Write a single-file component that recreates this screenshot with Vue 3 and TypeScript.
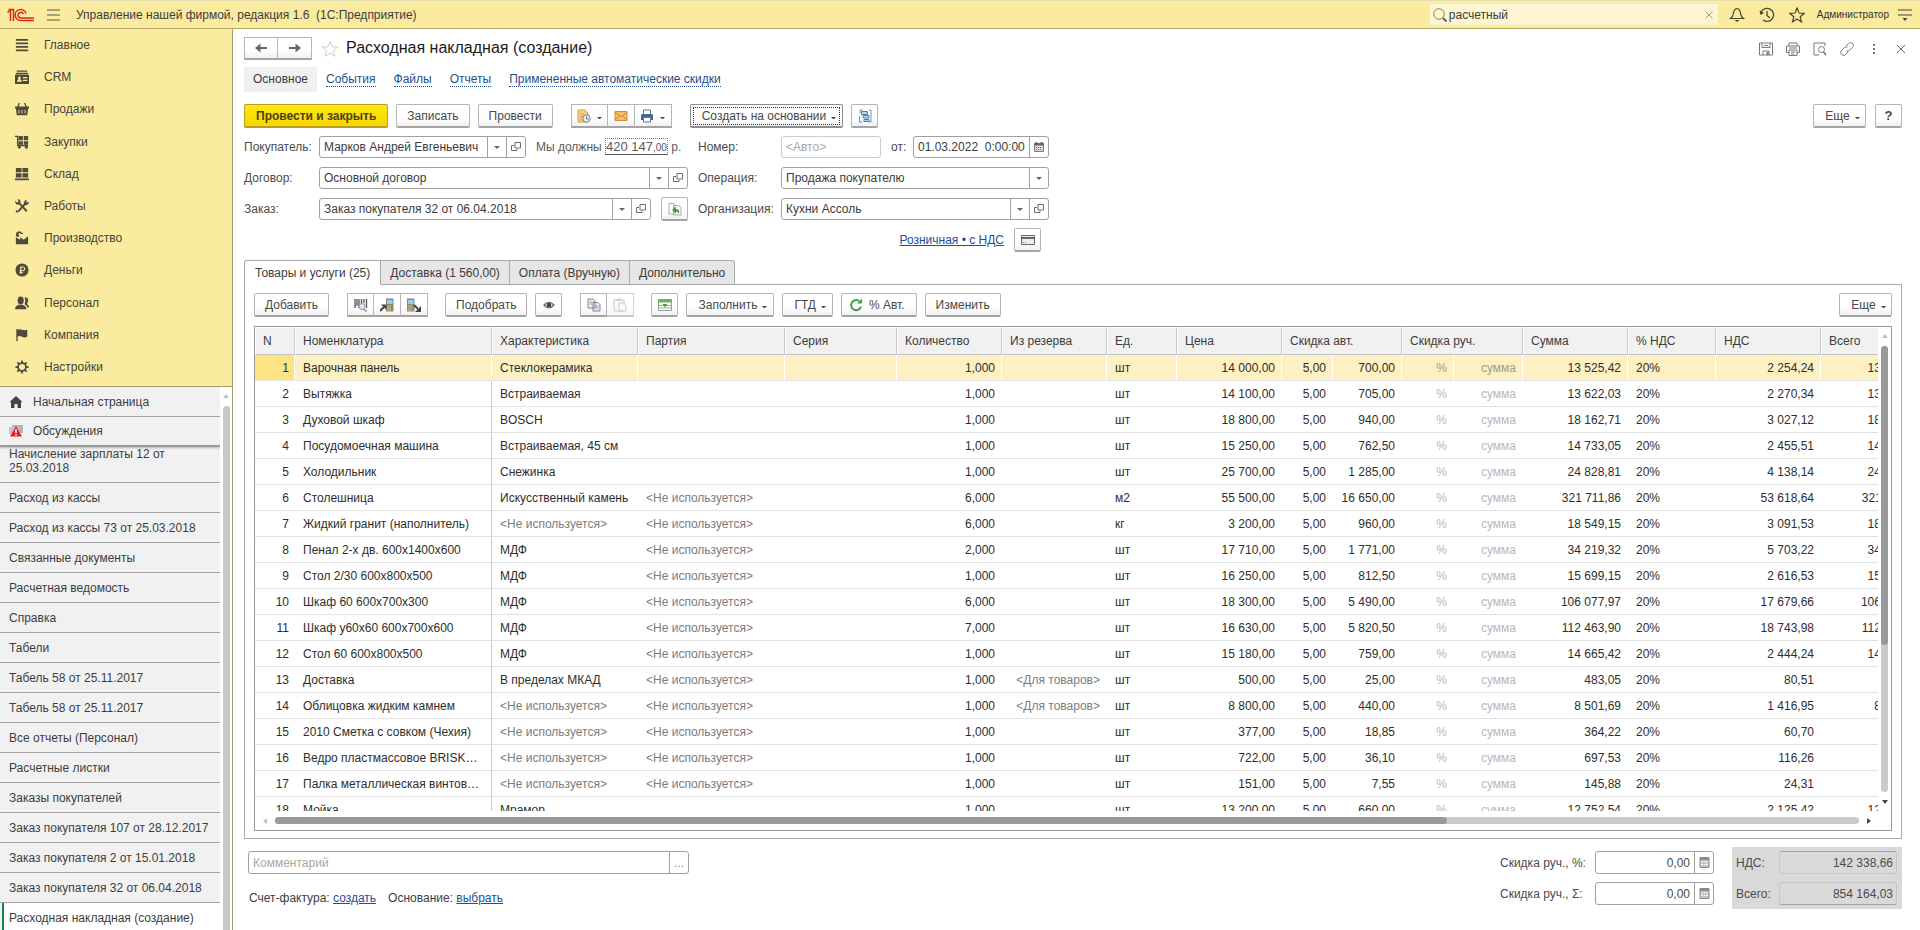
<script setup lang="ts">
import { ref } from 'vue'

interface Section { name: string; icon: string }
interface Row {
  n: number; item: string; feature: string; batch: string; qty: string; reserve: string; unit: string
  price: string; autoSum: string; sum: string; vat: string
}

const sections: Section[] = [
  { name: 'Главное', icon: '<path d="M1 2h14M1 6h14M1 10h14M1 14h14" stroke="currentColor" stroke-width="2"/>' },
  { name: 'CRM', icon: '<path d="M2 .5h12v1.500H2zM1 3h14v1.500H1z"/><path fill-rule="evenodd" d="M1 5h14q1 0 1 1v9q0 1-1 1H1q-1 0-1-1V6q0-1 1-1zM5 7.500a1.700 2 0 0 0-1 3.500q-2 .5-2 2.500h6q0-2-2-2.500a1.700 2 0 0 0-1-3.500zM9 8v1.500h5V8zM9 11v1.500h5V11z"/>' },
  { name: 'Продажи', icon: '<path d="M5 1 3 6M11 1l2 5" stroke="currentColor" stroke-width="1.500"/><path fill-rule="evenodd" d="M0 5h16v2.500h-1L14 15H2L1 7.500H0zM4 9v4h1V9zM7.500 9v4h1V9zM11 9v4h1V9z"/>' },
  { name: 'Закупки', icon: '<path d="M0 1.500h3V12h12" fill="none" stroke="currentColor" stroke-width="1.500"/><path d="M4 1h5v5H4zM10 1h5v5h-5zM4 7h5v4H4zM10 7h5v4h-5z"/><circle cx="5" cy="14" r="1.700"/><circle cx="13" cy="14" r="1.700"/>' },
  { name: 'Склад', icon: '<path d="M1 1h6.500v5H1zM8.500 1H15v5H8.500zM1 7h6.500v5H1zM8.500 7H15v5H8.500zM0 13h16v2H0z"/>' },
  { name: 'Работы', icon: '<path d="M3.500 14.500 13 4M5 5l8.500 9" stroke="currentColor" stroke-width="2.200"/><path d="M0 2l2.500 2L4 3 3 0q3 0 3.500 3L5 6 2 6.500Q0 5 0 2zM10 5l1-3 3-1.500-1.500 2.500L14 4l2-1q0 3-3 4zM1 12l3 3-3 .5z"/>' },
  { name: 'Производство', icon: '<path d="M1 15V7l5 3V7l4 3 5-4v9zM1 6 1.500 1.500h2.500L4.500 7zM3 .5h4v2H4zM7 2h2v1.500H6z"/>' },
  { name: 'Деньги', icon: '<path fill-rule="evenodd" d="M8 .5a7.500 7.500 0 1 0 0 15 7.500 7.500 0 0 0 0-15zM6 4h3a2.700 2.700 0 0 1 0 5.400H7.400v.8H9v1H7.400V12.500H6v-1.300H5v-1h1v-.8H5V8.200h1zm1.400 1.200v3H9a1.500 1.500 0 0 0 0-3z"/>' },
  { name: 'Персонал', icon: '<ellipse cx="6.500" cy="5" rx="3.500" ry="4.500"/><path d="M0 15q0-3.500 4.500-5h4q4.500 1.500 4.500 5z"/><path d="M11 1.500q4.500 0 4 4.500-.5 2-1.500 3 2.500.8 2.500 4h-2q-.5-2.500-3-3.500 1.500-4 0-8z"/>' },
  { name: 'Компания', icon: '<path d="M1.500 1v14h1.500v-5q2.500-1.500 5 0t6 0V2q-3 1-6 0T3 2V1z"/>' },
  { name: 'Настройки', icon: '<circle cx="8" cy="8" r="4.500" fill="none" stroke="currentColor" stroke-width="2"/><path d="M8 .5v3M8 12.500v3M.5 8h3M12.500 8h3M2.700 2.700l2 2M11.300 11.300l2 2M2.700 13.300l2-2M11.300 4.700l2-2" stroke="currentColor" stroke-width="2"/>' },
]

const opened: string[] = [
  'Начисление зарплаты 12 от 25.03.2018', 'Расход из кассы', 'Расход из кассы 73 от 25.03.2018', 'Связанные документы',
  'Расчетная ведомость', 'Справка', 'Табели', 'Табель 58 от 25.11.2017', 'Табель 58 от 25.11.2017', 'Все отчеты (Персонал)',
  'Расчетные листки', 'Заказы покупателей', 'Заказ покупателя 107 от 28.12.2017', 'Заказ покупателя 2 от 15.01.2018',
  'Заказ покупателя 32 от 06.04.2018', 'Расходная накладная (создание)',
]

const links: string[] = ['События', 'Файлы', 'Отчеты', 'Примененные автоматические скидки']
const tabs: string[] = ['Товары и услуги (25)', 'Доставка (1 560,00)', 'Оплата (Вручную)', 'Дополнительно']
const activeTab = ref(0)

const unused = '<Не используется>'
const forGoods = '<Для товаров>'
const source: string[][] = [
  ['Варочная панель', 'Стеклокерамика', '', '1,000', '', 'шт', '14 000,00', '700,00', '13 525,42', '2 254,24'],
  ['Вытяжка', 'Встраиваемая', '', '1,000', '', 'шт', '14 100,00', '705,00', '13 622,03', '2 270,34'],
  ['Духовой шкаф', 'BOSCH', '', '1,000', '', 'шт', '18 800,00', '940,00', '18 162,71', '3 027,12'],
  ['Посудомоечная машина', 'Встраиваемая, 45 см', '', '1,000', '', 'шт', '15 250,00', '762,50', '14 733,05', '2 455,51'],
  ['Холодильник', 'Снежинка', '', '1,000', '', 'шт', '25 700,00', '1 285,00', '24 828,81', '4 138,14'],
  ['Столешница', 'Искусственный камень', unused, '6,000', '', 'м2', '55 500,00', '16 650,00', '321 711,86', '53 618,64'],
  ['Жидкий гранит (наполнитель)', unused, unused, '6,000', '', 'кг', '3 200,00', '960,00', '18 549,15', '3 091,53'],
  ['Пенал 2-х дв. 600х1400х600', 'МДФ', unused, '2,000', '', 'шт', '17 710,00', '1 771,00', '34 219,32', '5 703,22'],
  ['Стол 2/30 600х800х500', 'МДФ', unused, '1,000', '', 'шт', '16 250,00', '812,50', '15 699,15', '2 616,53'],
  ['Шкаф 60 600х700х300', 'МДФ', unused, '6,000', '', 'шт', '18 300,00', '5 490,00', '106 077,97', '17 679,66'],
  ['Шкаф у60х60 600х700х600', 'МДФ', unused, '7,000', '', 'шт', '16 630,00', '5 820,50', '112 463,90', '18 743,98'],
  ['Стол 60 600х800х500', 'МДФ', unused, '1,000', '', 'шт', '15 180,00', '759,00', '14 665,42', '2 444,24'],
  ['Доставка', 'В пределах МКАД', unused, '1,000', forGoods, 'шт', '500,00', '25,00', '483,05', '80,51'],
  ['Облицовка жидким камнем', unused, unused, '1,000', forGoods, 'шт', '8 800,00', '440,00', '8 501,69', '1 416,95'],
  ['2010 Сметка с совком (Чехия)', unused, unused, '1,000', '', 'шт', '377,00', '18,85', '364,22', '60,70'],
  ['Ведро пластмассовое BRISK10 л', unused, unused, '1,000', '', 'шт', '722,00', '36,10', '697,53', '116,26'],
  ['Палка металлическая винтовая 2 м', unused, unused, '1,000', '', 'шт', '151,00', '7,55', '145,88', '24,31'],
  ['Мойка', 'Мрамор', '', '1,000', '', 'шт', '13 200,00', '660,00', '12 752,54', '2 125,42'],
]
const rows: Row[] = source.map((s, i) => ({
  n: i + 1, item: s[0], feature: s[1], batch: s[2], qty: s[3], reserve: s[4], unit: s[5],
  price: s[6], autoSum: s[7], sum: s[8], vat: s[9],
}))
const selected = ref(1)

const buyer = ref('Марков Андрей Евгеньевич')
const contract = ref('Основной договор')
const order = ref('Заказ покупателя 32 от 06.04.2018')
const date = ref('01.03.2022  0:00:00')
const org = ref('Кухни Ассоль')
const search = ref('расчетный')
const discountPercent = ref('0,00')
const discountSum = ref('0,00')
const comment = ref('')

const openIcon = '<path d="M5 1.500h5.500V7H5zM4 4.500H1.500v5H7V8" fill="none" stroke="#6a6a6a"/>'
const calcIcon = '<path d="M2 1.500h9v10H2z" fill="#c4c4c4" stroke="#8a8a8a"/><path d="M2 3h9" stroke="#8a8a8a" stroke-width="2"/><path d="M3 6h2m1 0h1m1 0h2M3 8.500h2m1 0h1m1 0h2" stroke="#fff"/>'
</script>

<template>
  <div class="app">
    <header class="topbar">
      <svg class="logo" viewBox="0 0 27 14" aria-label="1С" role="img">
        <g fill="none" stroke="#d8281e" stroke-width="1.500">
          <path d="M0.500 4.500 3.500 2v11M1.500 1.500h5V13" />
          <path d="M19 5.500a5.500 5.500 0 1 0-5 7H27" />
          <path d="M16.500 6a2.800 2.800 0 1 0-2.500 4H27" />
        </g>
      </svg>
      <button class="plain burger" aria-label="Меню"><svg viewBox="0 0 14 12"><path d="M0 1h13M0 6h13M0 11h13" stroke="#555" /></svg></button>
      <span class="apptitle">Управление нашей фирмой, редакция 1.6 &nbsp;(1С:Предприятие)</span>
      <div class="search">
        <svg viewBox="0 0 14 14"><circle cx="6" cy="6" r="5.300" fill="none" stroke="#8d8354" /><path d="M10 10l3.500 3.500" stroke="#6b6340" stroke-width="2" /></svg>
        <input v-model="search" aria-label="Поиск">
        <button class="plain clear" aria-label="Очистить"><svg viewBox="0 0 8 8"><path d="M.5.5l7 7M7.500.5l-7 7" stroke="#a29a72" /></svg></button>
      </div>
      <button class="plain ti" aria-label="Уведомления"><svg viewBox="0 0 16 16"><path d="M8 1.500Q5 2 4.500 6T1.500 11.500h13Q12 10 11.500 6T8 1.500z" fill="none" stroke="#4a4530" stroke-width="1.200" /><path d="M5.500 13h5L8 15z" fill="#4a4530" /></svg></button>
      <button class="plain ti" aria-label="История"><svg viewBox="0 0 16 16"><path d="M2.300 5A6.500 6.500 0 1 1 4 13M8 4v4.500l3 2.500" fill="none" stroke="#4a4530" stroke-width="1.300" /><path d="M.5 3.500 5 6 1.500 8z" fill="#4a4530" /></svg></button>
      <button class="plain ti" aria-label="Избранное"><svg viewBox="0 0 16 16"><path d="M8 1l2 5 5.200.3-4 3.400 1.300 5.200L8 12l-4.500 2.900 1.300-5.200-4-3.400L6 6z" fill="none" stroke="#4a4530" stroke-width="1.200" /></svg></button>
      <span class="user">Администратор</span>
      <button class="plain more" aria-label="Сервис"><svg viewBox="0 0 14 14"><path d="M0 2h14M0 7h14" stroke="#4a4530" stroke-width="1.200" /><path d="M4.500 10h5L7 13z" fill="#4a4530" /></svg></button>
    </header>

    <div class="body">
      <aside class="side">
        <nav class="sections">
          <a v-for="s in sections" :key="s.name" href="#">
            <svg viewBox="0 0 16 16" fill="currentColor" v-html="s.icon" />{{ s.name }}
          </a>
        </nav>
        <div class="windows">
          <nav class="wlist">
            <a class="w pinned" href="#"><svg viewBox="0 0 14 14"><path d="M7 1 .5 7H2v6h3.500V9h3v4H12V7h1.500z" fill="#444" /></svg>Начальная страница</a>
            <a class="w pinned talks" href="#"><svg viewBox="0 0 14 14"><path d="M3 1h11v8H3z" fill="#b3b3b3" /><path d="M0 3h10v7H5l-2 3v-3H0z" fill="#c4c6c8" /><path d="M7 2 13 12.500H1z" fill="#e22020" /><path d="M7 5v4M7 10v1.500" stroke="#fff" stroke-width="1.500" /></svg>Обсуждения</a>
            <a v-for="(w, i) in opened" :key="i" class="w" :class="{ first: i === 0, current: i === opened.length - 1 }" href="#">{{ w }}</a>
          </nav>
          <div class="wscroll"><i class="up" /><i class="thumb" /></div>
        </div>
      </aside>

      <main class="page">
        <div class="titlerow">
          <div class="group nav">
            <button class="btn" aria-label="Назад"><svg viewBox="0 0 12 10"><path d="M5.500.5v3.500H12v2H5.500v3.500L0 5z" fill="#666" /></svg></button>
            <button class="btn" aria-label="Вперед"><svg viewBox="0 0 12 10"><path d="M6.500.5v3.500H0v2h6.500v3.500L12 5z" fill="#666" /></svg></button>
          </div>
          <svg class="fav" viewBox="0 0 18 18"><path d="M9 1.500l2.200 5.300 5.600.3-4.400 3.600 1.500 5.600L9 13.200l-4.900 3.100 1.500-5.600L1.200 7.100l5.600-.3z" fill="none" stroke="#ccc" /></svg>
          <h1>Расходная накладная (создание)</h1>
          <div class="wtools">
            <button class="plain" aria-label="Сохранить"><svg viewBox="0 0 14 14"><path d="M.5 1h13v12H.5zM3 1v4.500h8V1M4 13V9h6v4M5 3.500h4" fill="none" stroke="#777" /><path d="M7.500 10h2v3h-2z" fill="#777" /></svg></button>
            <button class="plain" aria-label="Печать"><svg viewBox="0 0 14 14"><path d="M3 4V1h8v3M3 10.500H.5V4h13v6.500H11M3 8h8v5.500H3zM5 10h4M5 12h3M3 6h8" fill="none" stroke="#777" /></svg></button>
            <button class="plain" aria-label="Просмотр"><svg viewBox="0 0 14 14"><path d="M6 13H1V1h11v3" fill="none" stroke="#777" /><circle cx="8.500" cy="7.500" r="3" fill="none" stroke="#777" /><path d="M10.500 10l2.500 3" stroke="#777" stroke-width="1.500" /></svg></button>
            <button class="plain" aria-label="Ссылка"><svg viewBox="0 0 14 14"><path d="M6 4l2.500-2.500a2.800 2.800 0 0 1 4 4L9.500 8.500a2.500 2.500 0 0 1-3 .3M8 10l-2.500 2.500a2.800 2.800 0 0 1-4-4L4.500 5.500a2.500 2.500 0 0 1 3-.3" fill="none" stroke="#777" /></svg></button>
            <button class="plain" aria-label="Действия"><svg viewBox="0 0 14 14"><path d="M6 2h2v2H6zM6 6h2v2H6zM6 10h2v2H6z" fill="#777" /></svg></button>
            <button class="plain" aria-label="Закрыть"><svg viewBox="0 0 14 14"><path d="M3 3l8 8M11 3l-8 8" stroke="#666" /></svg></button>
          </div>
        </div>

        <nav class="subnav">
          <span class="here">Основное</span>
          <a v-for="l in links" :key="l" href="#">{{ l }}</a>
        </nav>

        <div class="commands">
          <button class="btn primary">Провести и закрыть</button>
          <button class="btn">Записать</button>
          <button class="btn">Провести</button>
          <div class="group docs">
            <button class="btn wide" aria-label="Состояние"><svg viewBox="0 0 14 14"><path d="M1 1h7l3 3v9H1z" fill="#f3d27c" stroke="#cda245" /><path d="M3 5h4M3 8h3M3 11h2" stroke="#cda245" /><circle cx="9.500" cy="9.500" r="3.700" fill="#e6e9f2" stroke="#76809c" /><path d="M9.500 7v3H12" fill="none" stroke="#76809c" /></svg><i class="caret" /></button>
            <button class="btn" aria-label="Письмо"><svg viewBox="0 0 14 14"><path d="M1 2.500h12v9H1z" fill="#f5bd68" stroke="#d08f36" /><path d="M1 3l6 5 6-5M1 11l4-4M13 11 9 7" fill="none" stroke="#c98730" /></svg></button>
            <button class="btn wide" aria-label="Печать"><svg viewBox="0 0 14 14"><path d="M3.500 1h7v5h-7z" fill="#fff" stroke="#56799b" /><path d="M2 5h10l1 1v5H1V6z" fill="#426b92" /><path d="M3.500 8.500h7v4.500h-7z" fill="#fff" stroke="#56799b" /></svg><i class="caret" /></button>
          </div>
          <button class="btn focus drop">Создать на основании<i class="caret" /></button>
          <button class="btn ico scheme" aria-label="Структура"><svg viewBox="0 0 14 14"><path d="M2 4.500V1h3M11 1h2v12h-2M1.500 7v6h3" fill="none" stroke="#6d96b8" /><path d="M3.500 2.500h6v3h-6zM5 6.500h6v2.500H5zM6 10.500h5v2H6z" fill="#b8d6ec" stroke="#4b80aa" /></svg></button>
          <span class="grow" />
          <button class="btn menu">Еще<i class="caret" /></button>
          <button class="btn ico help">?</button>
        </div>

        <div class="form">
          <div class="col left">
            <div class="line">
              <label for="buyer">Покупатель:</label>
              <div class="field b1"><input id="buyer" v-model="buyer"><button aria-label="Выбрать"><i class="tri" /></button><button aria-label="Открыть"><svg viewBox="0 0 12 12" v-html="openIcon" /></button></div>
              <span class="debt">Мы должны <a href="#">420 147<small>,00</small></a> р.</span>
            </div>
            <div class="line">
              <label for="contract">Договор:</label>
              <div class="field fill"><input id="contract" v-model="contract"><button aria-label="Выбрать"><i class="tri" /></button><button aria-label="Открыть"><svg viewBox="0 0 12 12" v-html="openIcon" /></button></div>
            </div>
            <div class="line">
              <label for="order">Заказ:</label>
              <div class="field fill"><input id="order" v-model="order"><button aria-label="Выбрать"><i class="tri" /></button><button aria-label="Открыть"><svg viewBox="0 0 12 12" v-html="openIcon" /></button></div>
              <button class="btn ico refill" aria-label="Заполнить по заказу"><svg viewBox="0 0 14 14"><path d="M1 1.500h5V12H1zM5.500 3.500h5l2.500 2V13H5.500z" fill="#fff" stroke="#aaa" /><path d="M4 8l4-3.500V7q4 0 3 5-1-2.500-3-2.500v2z" fill="#3fa22f" /></svg></button>
            </div>
          </div>
          <div class="col right">
            <div class="line">
              <label for="number">Номер:</label>
              <div class="field auto"><input id="number" placeholder="<Авто>"></div>
              <label class="from" for="date">от:</label>
              <div class="field fill"><input id="date" v-model="date" class="pre"><button aria-label="Календарь"><svg viewBox="0 0 12 12"><path d="M1.500 2.500h9v8h-9z" fill="#ddd" stroke="#777" /><path d="M1 3.500h10M3.500 1v2M8.500 1v2" stroke="#666" stroke-width="2" /><path d="M3 6.500h6M3 8.500h6" stroke="#666" stroke-dasharray="1 1" /></svg></button></div>
            </div>
            <div class="line">
              <label for="operation">Операция:</label>
              <div class="field fill"><select id="operation"><option>Продажа покупателю</option></select><button aria-label="Выбрать"><i class="tri" /></button></div>
            </div>
            <div class="line">
              <label for="org">Организация:</label>
              <div class="field fill"><input id="org" v-model="org"><button aria-label="Выбрать"><i class="tri" /></button><button aria-label="Открыть"><svg viewBox="0 0 12 12" v-html="openIcon" /></button></div>
            </div>
            <div class="line prices">
              <a class="link" href="#">Розничная • с НДС</a>
              <button class="btn ico" aria-label="Карта"><svg viewBox="0 0 14 14"><path d="M.5 2.500h13v9H.5z" fill="#eee" stroke="#666" /><path d="M0 5h14" stroke="#666" stroke-width="2" /><path d="M2 9.500h4" stroke="#777" stroke-dasharray="1 1" /></svg></button>
            </div>
          </div>
        </div>

        <div class="tabs" role="tablist">
          <button v-for="(t, i) in tabs" :key="t" role="tab" :aria-selected="i === activeTab" :class="{ on: i === activeTab }" @click="activeTab = i">{{ t }}</button>
        </div>

        <section class="panel">
          <div class="tools">
            <button class="btn">Добавить</button>
            <div class="group g1">
              <button class="btn" aria-label="Поиск по штрихкоду"><svg viewBox="0 0 14 14"><path d="M1 1v9M3 1v7M5 1v9M7.500 1v5M10 1v4M12.500 1v9" stroke="#555" stroke-width="1.300" /><circle cx="8" cy="8.500" r="3" fill="#d8e8f8" stroke="#8b98ad" /><path d="M10 11l2.500 2.500" stroke="#a6826f" stroke-width="1.500" /></svg></button>
              <button class="btn" aria-label="Загрузить из терминала"><svg viewBox="0 0 14 14"><path d="M6 .5h7.500v13H6z" fill="#8c8878" /><path d="M7 2h5.500v4H7z" fill="#8fd0ef" /><path d="M7.500 8h1m1 0h1m-3 2h1m1 0h1m-3 2h1m1 0h1" stroke="#f2d25c" stroke-width="1.400" /><path d="M0 13l4-4" stroke="#444" stroke-width="2" /><path d="M1 6.500h5.500V12z" fill="#444" /></svg></button>
              <button class="btn" aria-label="Выгрузить в терминал"><svg viewBox="0 0 14 14"><path d="M0 .5h7.500v13H0z" fill="#8c8878" /><path d="M1 2h5.500v4H1z" fill="#8fd0ef" /><path d="M1.500 8h1m1 0h1m-3 2h1m1 0h1m-3 2h1m1 0h1" stroke="#f2d25c" stroke-width="1.400" /><path d="M7 7l4 4" stroke="#444" stroke-width="2" /><path d="M14 8v6H8z" fill="#444" /></svg></button>
            </div>
            <button class="btn">Подобрать</button>
            <button class="btn ico eye" aria-label="Просмотр"><svg viewBox="0 0 14 14"><path d="M2 7q5-5.500 10 0-5 5.500-10 0z" fill="#ddd" stroke="#666" stroke-width="1.200" /><circle cx="7" cy="7" r="2.200" fill="#444" /></svg></button>
            <div class="group g2">
              <button class="btn" aria-label="Копировать"><svg viewBox="0 0 14 14"><path d="M1 1h5l2 2v7H1zM6 4.500h5l2 2V13H6z" fill="#e9edf2" stroke="#7c8590" /><path d="M7.500 8h4m-4 2h4M2.500 4h3m-3 2h3" stroke="#8fa0b4" /></svg></button>
              <button class="btn off" disabled aria-label="Вставить"><svg viewBox="0 0 14 14"><path d="M1 2h10v11H1z" fill="#fdf5ef" stroke="#cf9c80" /><path d="M4 .8h4v2H4z" fill="#aaa" /><path d="M6 5h5l2 2v6H6z" fill="#f6f6f6" stroke="#aaa" /></svg></button>
            </div>
            <button class="btn ico list" aria-label="Список"><svg viewBox="0 0 14 14"><path d="M.5 1.500h13v11H.5z" fill="#fff" stroke="#999" /><path d="M0 3h14" stroke="#6db35e" stroke-width="3" /><path d="M1 7.500h12M1 10h12" stroke="#aaa" /><path d="M4.500 6h5L7 9.500z" fill="#4ea13c" /></svg></button>
            <button class="btn drop">Заполнить<i class="caret" /></button>
            <button class="btn drop">ГТД<i class="caret" /></button>
            <button class="btn auto-pct"><svg viewBox="0 0 14 14"><path d="M12 8.500A5 5 0 1 1 10 3" fill="none" stroke="#46a046" stroke-width="2" /><path d="M8 5.500h5V.5z" fill="#46a046" /></svg>% Авт.</button>
            <button class="btn">Изменить</button>
            <span class="grow" />
            <button class="btn menu">Еще<i class="caret" /></button>
          </div>

          <div class="gridbox">
            <div class="clip">
              <table>
                <colgroup>
                  <col class="c40"><col class="c197"><col class="c146"><col class="c147"><col class="c112"><col class="c105"><col class="c105"><col class="c70"><col class="c105"><col class="c51"><col class="c69"><col class="c52"><col class="c69"><col class="c105"><col class="c88"><col class="c105"><col class="c107">
                </colgroup>
                <thead>
                  <tr>
                    <th>N</th><th>Номенклатура</th><th>Характеристика</th><th>Партия</th><th>Серия</th><th>Количество</th><th>Из резерва</th><th>Ед.</th><th>Цена</th>
                    <th colspan="2">Скидка авт.</th><th colspan="2">Скидка руч.</th><th>Сумма</th><th>% НДС</th><th>НДС</th><th>Всего</th>
                  </tr>
                </thead>
                <tbody>
                  <tr v-for="r in rows" :key="r.n" :class="{ sel: r.n === selected }" @click="selected = r.n">
                    <td class="r num">{{ r.n }}</td>
                    <td class="item">{{ r.item }}</td>
                    <td :class="{ dim: r.feature === unused }">{{ r.feature }}</td>
                    <td class="dim">{{ r.batch }}</td>
                    <td />
                    <td class="r">{{ r.qty }}</td>
                    <td class="r dim">{{ r.reserve }}</td>
                    <td>{{ r.unit }}</td>
                    <td class="r">{{ r.price }}</td>
                    <td class="r">5,00</td>
                    <td class="r">{{ r.autoSum }}</td>
                    <td class="r hint">%</td>
                    <td class="r hint">сумма</td>
                    <td class="r">{{ r.sum }}</td>
                    <td>20%</td>
                    <td class="r">{{ r.vat }}</td>
                    <td class="r">{{ r.sum }}</td>
                  </tr>
                </tbody>
              </table>
            </div>
            <div class="vs"><i class="up" /><div class="track"><i class="thumb" /></div><i class="down" /></div>
            <div class="hs"><i class="lt" /><div class="track"><i class="thumb" /></div><i class="rt" /></div>
          </div>
        </section>

        <footer class="foot">
          <div class="fl">
            <div class="field comment"><input v-model="comment" placeholder="Комментарий" aria-label="Комментарий"><button aria-label="Открыть комментарий">...</button></div>
            <p>Счет-фактура: <a class="link" href="#">создать</a><span class="basis">Основание: <a class="link" href="#">выбрать</a></span></p>
          </div>
          <div class="discounts">
            <label for="dp">Скидка руч., %:</label>
            <div class="field num"><input id="dp" v-model="discountPercent"><button aria-label="Калькулятор"><svg viewBox="0 0 13 13" v-html="calcIcon" /></button></div>
            <label for="ds">Скидка руч., Σ:</label>
            <div class="field num"><input id="ds" v-model="discountSum"><button aria-label="Калькулятор"><svg viewBox="0 0 13 13" v-html="calcIcon" /></button></div>
          </div>
          <div class="totals">
            <label for="tv">НДС:</label><input id="tv" value="142 338,66" readonly>
            <label for="tt">Всего:</label><input id="tt" value="854 164,03" readonly>
          </div>
        </footer>
      </main>
    </div>
  </div>
</template>

<style>
body { margin: 0; background: #fff; }
</style>

<style scoped>
* { box-sizing: border-box; }
.app { height: 100vh; display: flex; flex-direction: column; overflow: hidden; font: 12px/14px "Liberation Sans", Arial, sans-serif; color: #3c3c3c; }
button, input, select { font: inherit; color: inherit; margin: 0; }
a { color: inherit; text-decoration: none; }
svg { display: block; flex: none; }
.plain { border: 0; background: none; padding: 0; }
.grow { flex: 1; }

.topbar { height: 29px; flex: none; display: flex; align-items: center; background: #fbeb9e; border-bottom: 1px solid #b3a463; border-top: 1px solid #e3dfb4; padding: 0 8px 0 7px; }
.logo { width: 27px; height: 14px; }
.burger { margin-left: 13px; }
.burger svg { width: 14px; height: 12px; }
.apptitle { margin-left: 15px; flex: 1; }
.search { width: 288px; height: 21px; background: #fdf6d3; display: flex; align-items: center; padding: 0 4px 0 3px; margin-right: 11px; }
.search > svg { width: 14px; height: 14px; }
.search input { flex: 1; min-width: 0; border: 0; background: none; padding: 0 0 0 2px; outline: none; }
.clear svg { width: 8px; height: 8px; margin-right: 1px; }
.ti { margin-right: 14px; }
.ti svg { width: 16px; height: 16px; }
.user { font-size: 10px; margin-left: -2px; color: #333; }
.more { margin-left: 9px; }
.more svg { width: 14px; height: 14px; }

.body { flex: 1; min-height: 0; display: flex; }
.side { width: 233px; flex: none; display: flex; flex-direction: column; border-right: 1px solid #a39a6b; }
.sections { height: 358px; flex: none; display: flex; flex-direction: column; padding-bottom: 3px; background: #fbeb9e; border-bottom: 1px solid #a39a6b; }
.sections a { flex: 1; display: flex; align-items: center; padding-left: 15px; color: #45423a; }
.sections svg { width: 14px; height: 14px; margin-right: 15px; color: #4f4b3c; }
.windows { flex: 1; min-height: 0; display: flex; }
.wlist { flex: 1; min-width: 0; overflow: hidden; background: #f1f1f2; }
.w { display: flex; align-items: center; height: 30px; padding: 0 9px; border-bottom: 1px solid #a2a2a2; color: #3d3d3d; }
.pinned svg { width: 14px; height: 14px; margin-right: 10px; }
.talks { border-bottom: 2px solid #999; box-shadow: 0 1px 2px #bbb; }
.w.first { height: 36px; align-items: flex-start; padding-right: 40px; }
.w.current { background: #fff; border-left: 2px solid #0c8a4b; margin-left: 2px; padding-left: 5px; border-bottom: 0; }
.wscroll { width: 12px; display: flex; flex-direction: column; align-items: center; padding-top: 7px; background: #fff; }
.wscroll .thumb { width: 7px; flex: 1; margin-top: 8px; background: #c6c6c6; border-radius: 4px 4px 0 0; }
.up { border: 3px solid transparent; border-top: 0; border-bottom: 4px solid #c2c2c2; }
.down { border: 3px solid transparent; border-bottom: 0; border-top: 4px solid #444; }
.lt { border: 3px solid transparent; border-left: 0; border-right: 4px solid #c2c2c2; }
.rt { border: 3px solid transparent; border-right: 0; border-left: 4px solid #444; }

.page { flex: 1; min-width: 0; display: flex; flex-direction: column; padding: 8px 18px 0 11px; background: #fff; }
.btn { height: 24px; display: inline-flex; align-items: center; justify-content: center; padding: 0 10px; border: 1px solid #b5b5b5; border-bottom: 2px solid #a4a4a4; border-radius: 2px; background: linear-gradient(#fff 60%, #f1f1f1); white-space: nowrap; color: #474747; }
.btn svg { width: 14px; height: 14px; }
.btn.drop { padding: 0 6px 0 11px; }
.caret { border: 2px solid transparent; border-bottom: 0; border-top: 2px solid #444; width: 5px; margin: 4px 0 0 5px; }
.btn.ico { width: 27px; padding: 0; }
.group { display: flex; }
.group .btn { width: 27px; padding: 0; border-radius: 0; }
.group .btn + .btn { border-left: 0; }

.titlerow { display: flex; align-items: center; height: 23px; }
.nav.group .btn { width: 34px; height: 23px; }
.nav.group .btn svg { width: 12px; height: 10px; }
.fav { width: 18px; height: 18px; margin-left: 9px; }
h1 { font-size: 16px; line-height: 20px; font-weight: 400; color: #1c1c1c; margin: 0 0 2px 7px; flex: 1; }
.wtools { display: flex; gap: 13px; margin-right: -6px; }
.wtools svg { width: 14px; height: 14px; }

.subnav { display: flex; align-items: center; gap: 18px; height: 25px; margin-top: 7px; color: #1f4e8c; }
.here { background: #f0f0f0; color: #3c3c3c; padding: 0 9px; line-height: 25px; margin-right: -9px; }
.subnav a { border-bottom: 1px dotted #1f4e8c; }

.commands { display: flex; margin-top: 12px; gap: 8px; }
.btn.primary { padding: 0 11px; background: linear-gradient(#ffe512, #f7d800); border-color: #b89f1c; font-weight: 700; color: #4a4210; }
.docs { margin: 0 10px; }
.group .wide { width: 37px; }
.wide .caret { margin-left: 6px; }
.focus { border-color: #8c8c8c; outline: 1px dotted #333; outline-offset: -4px; }
.btn.menu { width: 53px; padding: 0 0 0 6px; }
.help { font-weight: 700; font-size: 13px; margin-left: 1px; }

.form { display: flex; gap: 10px; margin-top: 8px; height: 124px; }
.col { display: flex; flex-direction: column; gap: 9px; }
.left { width: 444px; }
.right { width: 351px; }
.line { display: flex; align-items: center; height: 22px; }
.left .line > label { width: 75px; flex: none; }
.right .line > label { width: 83px; flex: none; }
.line label { color: #4b4b4b; white-space: nowrap; }
.right .line > .from { width: 22px; margin-left: 10px; }
.field { display: flex; height: 22px; border: 1px solid #a0a0a0; border-radius: 3px; background: #fff; }
.field input, .field select { flex: 1; min-width: 0; width: 0; border: 0; background: none; padding: 0 0 0 4px; outline: none; appearance: none; }
.field button { width: 19px; flex: none; border: 0; border-left: 1px solid #a0a0a0; background: none; padding: 0; display: flex; align-items: center; justify-content: center; }
.field button svg { width: 12px; height: 12px; }
.pre { white-space: pre; }
.fill { flex: 1; }
.b1 { width: 207px; flex: none; }
.auto { width: 100px; border-color: #ccc; }
.field input::placeholder { color: #a8a8a8; opacity: 1; }
.tri { border: 3px solid transparent; border-bottom: 0; border-top: 3px solid #666; }
.debt { margin-left: 10px; white-space: nowrap; color: #5a5a5a; }
.debt a { border: 1px dotted #777; border-bottom: 1px solid #555; font-size: 13px; }
.debt small { font-size: 10px; }
.refill { margin-left: 10px; }
.prices { justify-content: flex-end; padding-right: 8px; }
.prices .btn { margin-left: 10px; }
.link { color: #1f4e9c; text-decoration: underline; }

.tabs { display: flex; height: 25px; margin-bottom: -1px; position: relative; }
.tabs button { padding: 0 9px; height: 25px; border: 1px solid #a9a9a9; border-left: 0; background: #e6e6e6; white-space: nowrap; }
.tabs button.on { padding: 0 10px; background: #fff; border-left: 1px solid #a9a9a9; border-bottom-color: #fff; border-radius: 3px 0 0 0; }
.tabs button:last-child { border-radius: 0 3px 0 0; }
.panel { flex: 1; min-height: 0; display: flex; flex-direction: column; border: 1px solid #a9a9a9; padding: 8px 9px 7px; }
.tools { display: flex; gap: 8px; height: 25px; }
.g1, .g2 { margin: 0 9px 0 10px; }
.off { opacity: .6; }
.btn.auto-pct { padding: 0 11px 0 7px; }
.auto-pct svg { margin-right: 6px; }

.gridbox { flex: 1; min-height: 0; margin-top: 8px; border: 1px solid #999; display: grid; grid-template-columns: minmax(0, 1fr) 13px; grid-template-rows: minmax(0, 1fr) 19px; }
.clip { overflow: hidden; }
table { width: 1673px; table-layout: fixed; border-collapse: separate; border-spacing: 0; }
.c40 { width: 40px; } .c51 { width: 51px; } .c52 { width: 52px; } .c69 { width: 69px; } .c70 { width: 70px; } .c88 { width: 88px; }
.c105 { width: 105px; } .c107 { width: 107px; } .c112 { width: 112px; } .c146 { width: 146px; } .c147 { width: 147px; } .c197 { width: 197px; }
th { height: 28px; padding: 0 0 0 7px; text-align: left; font-weight: 400; background: #f1f1f1; border: 1px solid #fff; border-right-color: #c9c9c9; border-bottom-color: #c4c4c4; color: #3c3c3c; }
td { height: 26px; padding: 0 7px 0 8px; border-bottom: 1px solid #e2e2e2; white-space: nowrap; overflow: hidden; color: #2e2e2e; }
td.item { text-overflow: ellipsis; padding-right: 10px; border-right: 1px solid #c9c9c9; }
.r { text-align: right; }
td.num { padding-right: 6px; }
td.dim { color: #7c7c7c; }
td.hint { color: #b8b8b8; }
.sel td { background: #fdf0c3; border-right: 1px solid #fff; }
.sel td.r { padding-right: 6px; }
.sel td.num { background: #fce386; padding-right: 5px; }
.sel td.hint { color: #a19c86; }
.vs { display: flex; flex-direction: column; align-items: center; padding: 7px 0; }
.vs .track { width: 7px; flex: 1; margin: 8px 0; background: #cbcbcb; border-radius: 4px; }
.vs .thumb { display: block; height: 67%; background: #999; border-radius: 4px; }
.hs { display: flex; align-items: center; grid-column: 1 / 3; padding: 0 20px 0 8px; }
.hs .track { height: 7px; flex: 1; margin: 0 8px; background: #cbcbcb; border-radius: 4px; }
.hs .thumb { display: block; height: 7px; width: 74%; background: #999; border-radius: 4px; }

.foot { height: 91px; flex: none; display: flex; padding: 8px 0 0 4px; }
.fl { flex: 1; padding-top: 4px; }
.comment { width: 441px; height: 23px; }
.comment button { color: #888; }
.fl p { margin: 17px 0 0 1px; }
.basis { margin-left: 12px; }
.discounts { display: grid; grid-template-columns: 95px 119px; grid-auto-rows: 23px; row-gap: 8px; align-items: center; padding-top: 4px; margin-right: 18px; color: #4b4b4b; }
.num.field { height: 23px; }
.field.num input { text-align: right; padding-right: 4px; }
.field.num button svg { width: 13px; height: 13px; }
.totals { width: 170px; height: 62px; background: #d9d9da; display: grid; grid-template-columns: 43px 1fr; grid-auto-rows: 23px; row-gap: 8px; align-items: center; padding: 4px 5px 0 4px; color: #4b4b4b; }
.totals input { min-width: 0; width: 100%; height: 23px; border: 1px solid #c6c6c8; border-radius: 3px; background: none; text-align: right; padding: 0 3px; outline: none; }
.totals input:first-of-type { border-top-color: #a0a0a0; }
.totals input:last-of-type { border-bottom-color: #a0a0a0; }
</style>
